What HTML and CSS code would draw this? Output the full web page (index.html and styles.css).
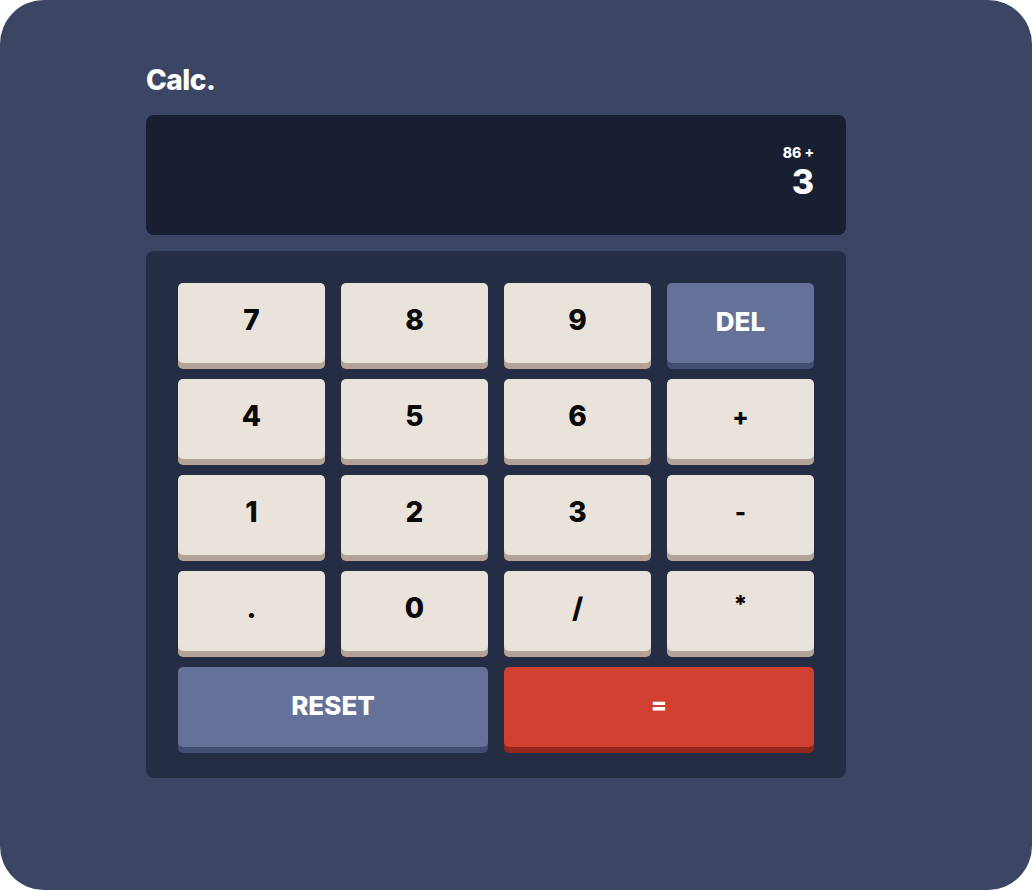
FILE: index.html
```html
<!DOCTYPE html>
<html lang="en">
<head>
<meta charset="utf-8">
<title>Calc.</title>
<link rel="stylesheet" href="styles.css">
</head>
<body>
<main class="app">
  <div class="calc">
    <h1 class="title">Calc.</h1>
    <section class="screen">
      <div class="prev">86 +</div>
      <div class="current">3</div>
    </section>
    <section class="keypad">
      <button class="key">7</button>
      <button class="key">8</button>
      <button class="key">9</button>
      <button class="key key-alt">DEL</button>
      <button class="key">4</button>
      <button class="key">5</button>
      <button class="key">6</button>
      <button class="key key-op">+</button>
      <button class="key">1</button>
      <button class="key">2</button>
      <button class="key">3</button>
      <button class="key key-op">-</button>
      <button class="key">.</button>
      <button class="key">0</button>
      <button class="key">/</button>
      <button class="key key-op key-star">*</button>
      <button class="key key-alt key-wide">RESET</button>
      <button class="key key-eq key-wide">=</button>
    </section>
  </div>
</main>
</body>
</html>
```
FILE: styles.css
```css
* { box-sizing: border-box; }
html, body { margin: 0; padding: 0; background: #ffffff; }
body { font-family: "Inter", "Liberation Sans", sans-serif; }

.app {
  width: 1032px;
  height: 890px;
  background: #3b4664;
  border-radius: 44px;
  padding: 64px 0 0 146px;
}

.calc {
  width: 700px;
  display: flex;
  flex-direction: column;
}

.title {
  margin: 0 0 19px;
  color: #ffffff;
  font-size: 28px;
  line-height: 32px;
  font-weight: 800;
  letter-spacing: -0.5px;
}

.screen {
  height: 120px;
  background: #181f32;
  border-radius: 8px;
  padding: 30px 32px 0;
  display: flex;
  flex-direction: column;
  align-items: flex-end;
  color: #ffffff;
  font-weight: 800;
}

.prev {
  font-size: 14px;
  line-height: 16px;
}

.current {
  font-size: 34px;
  line-height: 36px;
  margin-top: 3px;
}

.keypad {
  margin-top: 16px;
  background: #242d44;
  border-radius: 8px;
  padding: 32px 32px 31px;
  display: grid;
  grid-template-columns: repeat(4, 147px);
  grid-auto-rows: 80px;
  column-gap: 16px;
  row-gap: 16px;
}

.key {
  border: none;
  border-radius: 5px;
  background: #eae3dc;
  box-shadow: 0 6px 0 #b3a497;
  color: #0a0a0a;
  font-family: inherit;
  font-size: 28px;
  font-weight: 800;
  padding: 0 0 6px;
  cursor: pointer;
}

.key-op { font-size: 24px; }

.key-star { padding-bottom: 14px; }

.key-alt {
  background: #647198;
  box-shadow: 0 6px 0 #414e73;
  color: #ffffff;
  font-size: 26px;
  padding-bottom: 4px;
}

.key-eq {
  background: #d03f2f;
  box-shadow: 0 6px 0 #93261a;
  color: #ffffff;
  font-size: 24px;
}

.key-wide { grid-column: span 2; }
```
